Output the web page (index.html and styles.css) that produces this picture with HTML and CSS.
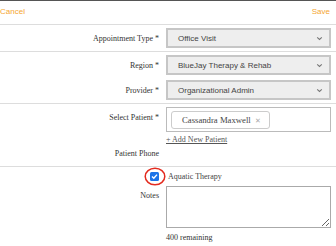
FILE: index.html
```html
<!DOCTYPE html>
<html>
<head>
<meta charset="utf-8">
<link rel="stylesheet" href="styles.css">
</head>
<body>
<div class="page">
  <div class="header">
    <span class="link">Cancel</span>
    <span class="link">Save</span>
  </div>
  <div class="section">
    <div class="row">
      <label class="lbl">Appointment Type *</label>
      <div class="sel"><span>Office Visit</span><svg class="chev" width="7" height="5" viewBox="0 0 7 5"><path d="M1.2 1.4 L3.5 3.5 L5.8 1.4" fill="none" stroke="#777" stroke-width="1.1"/></svg></div>
    </div>
  </div>
  <div class="section">
    <div class="row">
      <label class="lbl">Region *</label>
      <div class="sel"><span>BlueJay Therapy &amp; Rehab</span><svg class="chev" width="7" height="5" viewBox="0 0 7 5"><path d="M1.2 1.4 L3.5 3.5 L5.8 1.4" fill="none" stroke="#777" stroke-width="1.1"/></svg></div>
    </div>
    <div class="row">
      <label class="lbl">Provider *</label>
      <div class="sel"><span>Organizational Admin</span><svg class="chev" width="7" height="5" viewBox="0 0 7 5"><path d="M1.2 1.4 L3.5 3.5 L5.8 1.4" fill="none" stroke="#777" stroke-width="1.1"/></svg></div>
    </div>
  </div>
  <div class="section">
    <div class="row top">
      <label class="lbl pt">Select Patient *</label>
      <div class="ctl">
        <div class="tagbox"><span class="tag">Cassandra Maxwell <span class="x">✕</span></span></div>
        <a class="add">+ Add New Patient</a>
      </div>
    </div>
    <div class="row phone">
      <label class="lbl">Patient Phone</label>
      <div></div>
    </div>
  </div>
  <div class="section nb">
    <div class="row check">
      <div class="cbcell">
        <span class="cbwrap">
          <span class="cb"><svg width="9" height="9" viewBox="0 0 9 9"><path d="M2 4.6 L3.8 6.3 L7 2.6" fill="none" stroke="#fff" stroke-width="1.4"/></svg></span>
          <svg class="ring" width="22" height="19" viewBox="0 0 22 19"><ellipse cx="11" cy="9.5" rx="9.8" ry="8.3" fill="none" stroke="#e32b1f" stroke-width="1.5"/></svg>
        </span>
      </div>
      <span class="txt">Aquatic Therapy</span>
    </div>
    <div class="row top notes">
      <label class="lbl nt">Notes</label>
      <div class="ctl">
        <textarea class="ta"></textarea>
        <div class="rem">400 remaining</div>
      </div>
    </div>
  </div>
</div>
</body>
</html>
```
FILE: styles.css
```css
html, body { margin: 0; padding: 0; background: #fff; }
body { width: 336px; height: 246px; overflow: hidden; font-family: "Liberation Serif", "Times New Roman", serif; font-size: 8px; color: #333; }
.page { width: 336px; }
.header {
  box-sizing: border-box;
  height: 25px;
  border-top: 1px solid #555;
  border-bottom: 1px solid #ddd;
  display: flex;
  align-items: center;
  justify-content: space-between;
  padding: 0 6px 3px 0;
}
.link { font-family: "Liberation Sans", Arial, sans-serif; font-size: 8px; color: #f5a631; }
.section { border-bottom: 1px solid #ddd; padding: 2px 0; }
.section.nb { border-bottom: none; }
.row {
  display: grid;
  grid-template-columns: 159px 1fr;
  column-gap: 7px;
  padding: 1px 5px 1px 0;
  align-items: center;
}
.row.top { align-items: start; }
.lbl { text-align: right; color: #333; }
.sel {
  height: 16px;
  border: 2px solid #c6c6c6;
  background: #eeeeee;
  display: flex;
  align-items: center;
  justify-content: space-between;
  padding: 0 6px 0 10px;
  font-family: "Liberation Sans", Arial, sans-serif;
  font-size: 8px;
  color: #444;
}
.chev { display: block; }
.row + .row { margin-top: 3px; }
.ctl { display: flex; flex-direction: column; align-items: flex-start; }
.pt { margin-top: 6px; }
.tagbox {
  box-sizing: border-box;
  width: 100%;
  height: 25px;
  border: 1px solid #bbb;
  display: flex;
  align-items: center;
  padding-left: 4px;
}
.tag {
  border: 1px solid #ccc;
  border-radius: 3px;
  padding: 3px 8px 3px 10px;
  color: #444;
  font-size: 8.7px;
}
.x { color: #aaa; font-family: "DejaVu Sans", sans-serif; font-size: 7px; margin-left: 2px; }
.add { margin-top: 3px; text-decoration: underline; color: #555; }
.phone { margin-top: 11px; padding-bottom: 6px; }
.check { padding-top: 3px; }
.cbcell { display: flex; justify-content: flex-end; }
.cbwrap { position: relative; display: inline-block; width: 9px; height: 9px; }
.cb { display: block; width: 9px; height: 9px; background: #1a73e8; border-radius: 1.5px; }
.cb svg { display: block; }
.ring { position: absolute; left: -6px; top: -5px; }
.txt { color: #444; padding-left: 2px; }
.notes { margin-top: 13px; }
.nt { margin-top: 5px; }
.ta {
  box-sizing: border-box;
  width: 100%;
  height: 42px;
  border: 1px solid #aaa;
  margin: 0;
  resize: vertical;
  display: block;
}
.rem { margin-top: 5px; color: #333; }
```
